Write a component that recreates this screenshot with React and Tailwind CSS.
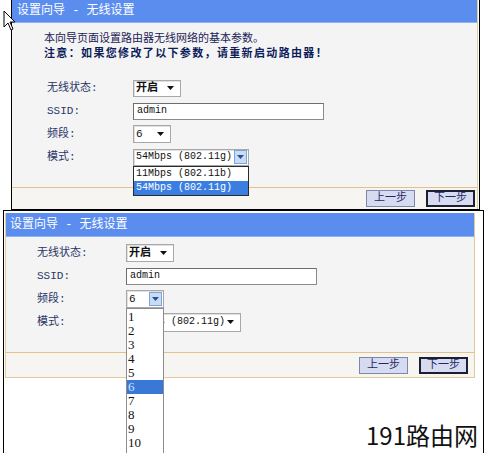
import React from 'react';

const mono = { fontFamily: '"Liberation Mono", "Noto Sans CJK SC", monospace' };

const Arrow = ({ color = '#111' }) => (
  <svg width="7" height="4" viewBox="0 0 7 4">
    <path d="M0 0 L7 0 L3.5 4 Z" fill={color} />
  </svg>
);

const PressedArrow = () => (
  <div className="flex items-center justify-center w-[13px] h-[14px] bg-[#c9dcf5] border border-[#7fa3d6]">
    <Arrow color="#2c4f94" />
  </div>
);

const Select = ({ value, className, pressed, textClass = 'text-[11px]' }) => (
  <div className={`flex items-center justify-between bg-white border border-[#a8a8a8] shadow-[inset_1px_1px_0_#e0e0e0] pl-[2px] pr-[1px] ${className}`}>
    <span className={`${textClass} text-[#111] leading-none whitespace-nowrap`}>{value}</span>
    {pressed ? <PressedArrow /> : <span className="pr-[5px] flex"><Arrow /></span>}
  </div>
);

const Input = ({ value, className }) => (
  <div className={`flex items-center bg-white border border-[#8a8a8a] border-t-[#6d6d6d] border-l-[#6d6d6d] pl-[3px] ${className}`}>
    <span className="text-[10px] text-[#111] leading-none">{value}</span>
  </div>
);

const Button = ({ label, active }) => (
  <div
    className={`w-[49px] h-[17px] flex items-center justify-center bg-[#d6dbf1] text-[11px] text-[#1d2a62] ${
      active ? 'border-2 border-[#1c1f30]' : 'border border-[#7d87aa]'
    }`}
  >
    {label}
  </div>
);

const Row = ({ label, labelPad, children }) => (
  <div className="flex items-center h-[18px]">
    <div className={`w-[89px] text-[11px] text-[#2b3466] ${labelPad}`}>{label}</div>
    {children}
  </div>
);

const Cursor = () => (
  <svg className="absolute left-[3px] top-[10px]" width="13" height="21" viewBox="0 0 13 21">
    <path d="M1 1 L1 17 L5 13 L8 20 L10 19 L7 12 L12 12 Z" fill="#fff" stroke="#000" strokeWidth="1" strokeLinejoin="round" />
  </svg>
);

const channels = ['1', '2', '3', '4', '5', '6', '7', '8', '9', '10', '11'];

export default function App() {
  return (
    <div className="relative w-[486px] h-[453px] overflow-hidden bg-white" style={mono}>
      {/* first screenshot */}
      <div className="ml-[11px] w-[469px] h-[210px] border-x border-b border-black flex flex-col">
        <div className="flex-1 flex flex-col border-r border-[#e3cb98] mr-[1px]">
          <div className="h-[23px] bg-[#5b8def] border-b border-[#8fb2f4] flex items-center pl-[5px] text-white text-[12px]">
            设置向导 - 无线设置
          </div>
          <div className="flex-1 bg-[#f4f4f4] pl-[32px] pt-[9px]">
            <div className="text-[11px] leading-[15px] text-[#1b2255]">本向导页面设置路由器无线网络的基本参数。</div>
            <div className="text-[11px] leading-[15px] font-bold tracking-[1.35px] text-[#0d1c5a]">
              注意：如果您修改了以下参数，请重新启动路由器！
            </div>
            <div className="mt-[17px] flex flex-col gap-[5px]">
              <Row label="无线状态:" labelPad="pl-[3px]">
                <Select value="开启" className="w-[48px] h-[17px]" textClass="text-[11px] font-bold" />
              </Row>
              <Row label="SSID:" labelPad="pl-[3px]">
                <Input value="admin" className="w-[191px] h-[17px]" />
              </Row>
              <Row label="频段:" labelPad="pl-[3px]">
                <Select value="6" className="w-[38px] h-[18px]" />
              </Row>
              <Row label="模式:" labelPad="pl-[3px]">
                <div className="relative">
                  <Select value="54Mbps (802.11g)" className="w-[116px] h-[17px]" textClass="text-[10px]" pressed />
                  <div className="absolute left-0 top-full z-10 w-[116px] bg-white border border-[#2a2a2a] text-[10px]">
                    <div className="h-[14px] leading-[14px] pl-[2px] text-[#111]">11Mbps (802.11b)</div>
                    <div className="h-[14px] leading-[14px] pl-[2px] bg-[#3a7ee2] text-white">54Mbps (802.11g)</div>
                  </div>
                </div>
              </Row>
            </div>
          </div>
          <div className="h-px bg-[#e4c287]" />
          <div className="h-[21px] bg-[#f6f5f2] flex items-center justify-end gap-[11px] pr-[2px]">
            <Button label="上一步" />
            <Button label="下一步" active />
          </div>
        </div>
      </div>

      {/* second screenshot */}
      <div className="ml-[3px] w-[481px] h-[243px] border-x border-t border-black pt-[2px]">
        <div className="ml-[1px] w-[470px] border-x border-b border-[#e3cb98] flex flex-col">
          <div className="h-[24px] bg-[#5b8def] border-b border-[#8fb2f4] flex items-center pl-[4px] text-white text-[12px]">
            设置向导 - 无线设置
          </div>
          <div className="bg-[#f4f4f4] pl-[31px] pt-[7px] pb-[21px] flex flex-col gap-[5px]">
            <Row label="无线状态:" labelPad="text-[11.5px]">
              <Select value="开启" className="w-[48px] h-[18px]" textClass="text-[11px] font-bold" />
            </Row>
            <Row label="SSID:" labelPad="">
              <Input value="admin" className="w-[191px] h-[17px]" />
            </Row>
            <Row label="频段:" labelPad="">
              <div className="relative">
                <Select value="6" className="w-[38px] h-[18px]" pressed />
                <div
                  className="absolute left-0 top-full z-10 w-[38px] h-[160px] bg-white border border-[#8c8c8c] pt-[1px]"
                  style={{ fontFamily: '"Liberation Serif", serif' }}
                >
                  {channels.map((c) => (
                    <div
                      key={c}
                      className={`h-[14px] leading-[14px] pl-[1px] text-[13px] ${
                        c === '6' ? 'bg-[#3a78d8] text-[#d3e5ff]' : 'text-[#111]'
                      }`}
                    >
                      {c}
                    </div>
                  ))}
                </div>
              </div>
            </Row>
            <Row label="模式:" labelPad="">
              <Select value="54Mbps (802.11g)" className="w-[115px] h-[19px]" textClass="text-[10px]" />
            </Row>
          </div>
          <div className="h-px bg-[#e4c287]" />
          <div className="h-[24px] bg-[#f6f5f2] flex items-center justify-end gap-[11px] pr-[6px]">
            <Button label="上一步" />
            <Button label="下一步" active />
          </div>
        </div>
      </div>

      <Cursor />
      <div
        className="absolute left-[366px] top-[419px] text-[24px] leading-[32px] text-[#111]"
        style={{ fontFamily: '"Noto Sans CJK SC", sans-serif' }}
      >
        191路由网
      </div>
    </div>
  );
}
